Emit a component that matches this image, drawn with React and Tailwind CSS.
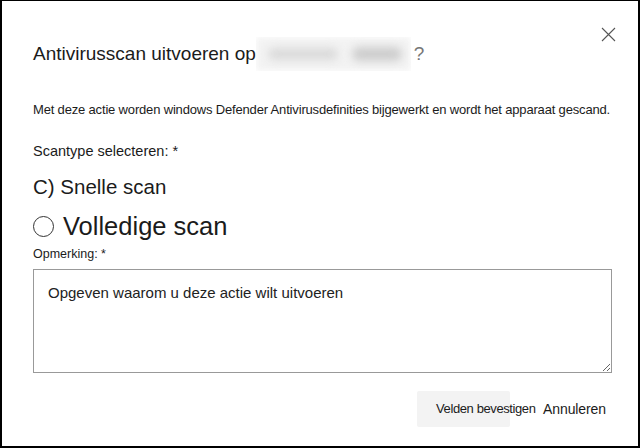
import React from 'react';

const App = () => {
  return (
    <div className="relative w-[640px] h-[448px] bg-white border-black border-t border-l-2 border-r-2 border-b-2 font-['Liberation_Sans',Arial,sans-serif] text-[#1b1b1b] overflow-hidden">
      <button
        aria-label="Sluiten"
        className="absolute top-[26px] right-[22px] w-[15px] h-[15px] text-[#555]"
      >
        <svg viewBox="0 0 15 15" width="15" height="15" fill="none" stroke="currentColor" strokeWidth="1.1">
          <path d="M1 1 L14 14 M14 1 L1 14" />
        </svg>
      </button>

      <div className="flex flex-col pl-[31px] pr-[27px]">
        <h1 className="mt-[41px] flex items-center h-[24px] text-[19px] leading-[24px] font-normal">
          <span>Antivirusscan uitvoeren op</span>
          <span className="relative inline-flex items-center gap-[14px] w-[155px] h-[34px] pl-[12px] overflow-hidden">
            <span className="absolute inset-0 bg-[#f3f3f3] blur-[3px]" />
            <span className="relative w-[70px] h-[12px] rounded-full bg-[#dadada] blur-[4px]" />
            <span className="relative w-[50px] h-[14px] rounded-full bg-[#cdcdcd] blur-[4px]" />
          </span>
          <span className="text-[#777] ml-[3px]">?</span>
        </h1>

        <p className="mt-[35px] text-[13px] leading-[18px] tracking-[-0.17px] whitespace-nowrap">
          Met deze actie worden windows Defender Antivirusdefinities bijgewerkt en wordt het apparaat gescand.
        </p>

        <p className="mt-[23px] text-[14.5px] leading-[18px]">Scantype selecteren: *</p>

        <p className="mt-[14px] text-[20.5px] leading-[26px]">C) Snelle scan</p>

        <label className="mt-[11px] flex items-center h-[30px] text-[25.5px] leading-[30px]">
          <span className="w-[21px] h-[21px] rounded-full border border-[#333] mr-[9px]" />
          Volledige scan
        </label>

        <p className="mt-[5px] text-[12.5px] leading-[16px]">Opmerking: *</p>

        <textarea
          className="mt-[7px] w-[579px] h-[104px] border border-[#999] pl-[14px] pt-[13px] text-[15px] leading-[20px] outline-none resize-y placeholder:text-[#222]"
          placeholder="Opgeven waarom u deze actie wilt uitvoeren"
        />

        <div className="mt-[18px] flex items-center justify-end pr-[5px]">
          <button className="w-[93px] h-[36px] bg-[#f3f3f3] rounded-[2px] text-[13px] tracking-[-0.4px] text-left pl-[19px] whitespace-nowrap">
            Velden bevestigen
          </button>
          <button className="ml-[33px] h-[36px] text-[14px] tracking-[-0.1px] text-[#1b1b1b]">Annuleren</button>
        </div>
      </div>
    </div>
  );
};

export default App;
